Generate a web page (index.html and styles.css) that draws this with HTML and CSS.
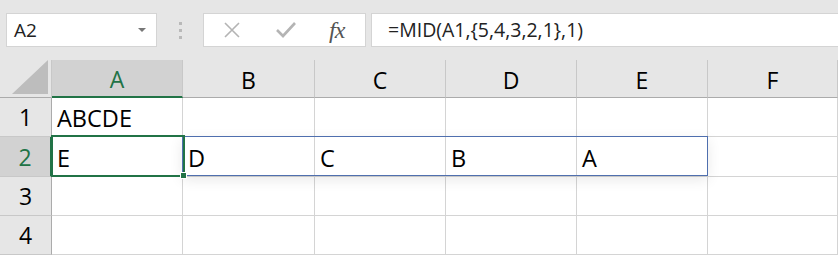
FILE: index.html
```html
<!DOCTYPE html>
<html lang="en">
<head>
    <meta charset="UTF-8">
    <title>Sheet1</title>
    <link rel="stylesheet" href="styles.css">
</head>
<body>
    <div class="formula-bar">
        <div class="name-box">
            <span>A2</span>
            <svg class="caret" width="8" height="5" viewBox="0 0 8 5"><path d="M0 0h8L4 4z" fill="#777"/></svg>
        </div>
        <div class="grip"><i></i><i></i><i></i></div>
        <div class="fx-box">
            <svg width="20" height="20" viewBox="0 0 20 20"><path d="M3 3l14 14M17 3L3 17" stroke="#b4b4b4" stroke-width="1.6" fill="none"/></svg>
            <svg width="22" height="20" viewBox="0 0 22 20"><path d="M2 10l6 6L20 3" stroke="#b4b4b4" stroke-width="2.6" fill="none"/></svg>
            <span class="fx">fx</span>
        </div>
        <div class="formula-input">=MID(A1,{5,4,3,2,1},1)</div>
    </div>

    <div class="sheet">
        <div class="corner"><svg width="36" height="34" viewBox="0 0 36 34"><path d="M36 0V34H0z" fill="#bdbdbd"/></svg></div>
        <div class="col-head active">A</div>
        <div class="col-head">B</div>
        <div class="col-head">C</div>
        <div class="col-head">D</div>
        <div class="col-head">E</div>
        <div class="col-head">F</div>

        <div class="row-head">1</div>
        <div class="cell">ABCDE</div>
        <div class="cell"></div><div class="cell"></div><div class="cell"></div><div class="cell"></div><div class="cell"></div>

        <div class="row-head active">2</div>
        <div class="cell">E</div>
        <div class="cell">D</div>
        <div class="cell">C</div>
        <div class="cell">B</div>
        <div class="cell">A</div>
        <div class="cell"></div>

        <div class="row-head">3</div>
        <div class="cell"></div><div class="cell"></div><div class="cell"></div><div class="cell"></div><div class="cell"></div><div class="cell"></div>

        <div class="row-head">4</div>
        <div class="cell"></div><div class="cell"></div><div class="cell"></div><div class="cell"></div><div class="cell"></div><div class="cell"></div>

        <div class="spill"></div>
        <div class="active-cell"><span class="handle"></span></div>
    </div>
</body>
</html>
```

FILE: styles.css
```css
body {
    margin: 0;
    width: 838px;
    height: 256px;
    overflow: hidden;
    background: #fff;
    font-family: 'Open Sans', 'Noto Sans', sans-serif;
    color: #000;
}
.formula-bar {
    display: flex;
    align-items: center;
    height: 60px;
    padding-left: 6px;
    background: #e6e6e6;
    box-sizing: border-box;
}
.name-box {
    display: flex;
    align-items: center;
    justify-content: space-between;
    width: 151px;
    height: 34px;
    padding: 0 10px 0 7px;
    box-sizing: border-box;
    background: #fff;
    border: 1px solid #d4d4d4;
    font-size: 19px;
    color: #222;
}
.caret {
    margin-top: 1px;
}
.grip {
    display: flex;
    flex-direction: column;
    gap: 4px;
    width: 46px;
    align-items: center;
}
.grip i {
    width: 3px;
    height: 3px;
    background: #b9b9b9;
}
.fx-box {
    display: flex;
    align-items: center;
    width: 163px;
    height: 34px;
    box-sizing: border-box;
    padding-left: 18px;
    background: #fff;
    border: 1px solid #d4d4d4;
}
.fx-box svg + svg {
    margin-left: 33px;
}
.fx {
    margin-left: 32px;
    font-family: 'Liberation Serif', serif;
    font-style: italic;
    font-size: 24px;
    color: #555;
    letter-spacing: -1px;
}
.formula-input {
    flex: 1;
    height: 34px;
    margin-left: 5px;
    padding-left: 16px;
    box-sizing: border-box;
    background: #fff;
    border: 1px solid #d4d4d4;
    border-right: none;
    font-size: 19.5px;
    line-height: 32px;
    color: #222;
}
.sheet {
    position: relative;
    display: grid;
    grid-template-columns: 52px 131px 132px 131px 131px 131px 130px;
    grid-template-rows: 38px 39px 40px 39px 39px;
}
.corner {
    display: flex;
    align-items: flex-end;
    justify-content: flex-end;
    padding: 0 3px 3px 0;
    background: #e6e6e6;
    border-right: 1px solid #c8c8c8;
    border-bottom: 1px solid #ababab;
}
.col-head {
    display: flex;
    align-items: center;
    justify-content: center;
    background: #e6e6e6;
    border-right: 1px solid #c8c8c8;
    border-bottom: 1px solid #ababab;
    font-size: 23px;
    padding-top: 2px;
    box-sizing: border-box;
}
.col-head.active {
    background: #d2d2d2;
    color: #217346;
    border-bottom: 2px solid #217346;
}
.row-head {
    display: flex;
    align-items: center;
    justify-content: center;
    background: #e6e6e6;
    border-right: 1px solid #ababab;
    border-bottom: 1px solid #c8c8c8;
    font-size: 23px;
}
.row-head.active {
    background: #d2d2d2;
    color: #217346;
    border-right: 2px solid #217346;
}
.cell {
    display: flex;
    align-items: center;
    padding: 2px 0 0 5px;
    border-right: 1px solid #d4d4d4;
    border-bottom: 1px solid #d4d4d4;
    font-size: 23.5px;
    box-sizing: border-box;
}
.spill {
    position: absolute;
    left: 182px;
    top: 76px;
    width: 526px;
    height: 40px;
    box-sizing: border-box;
    border: 1px solid #4f6fae;
    box-shadow: 0 4px 14px rgba(0, 0, 0, 0.09);
}
.active-cell {
    position: absolute;
    left: 51px;
    top: 75px;
    width: 134px;
    height: 42px;
    box-sizing: border-box;
    border: 2px solid #217346;
}
.handle {
    position: absolute;
    right: -4px;
    bottom: -4px;
    width: 5px;
    height: 5px;
    background: #217346;
    border: 1px solid #fff;
}
```
